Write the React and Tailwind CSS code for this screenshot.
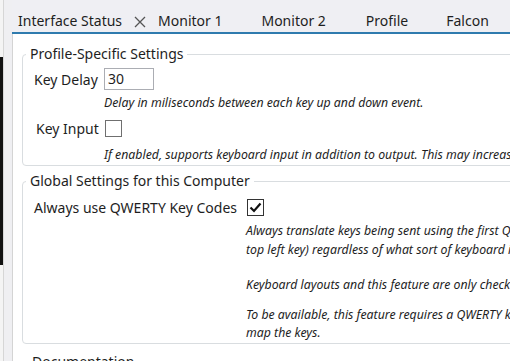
const Check = () => (
  <svg width="13" height="11" viewBox="0 0 13 11" className="block">
    <path d="M1.5 5.5 L5 9 L11.5 1.5" fill="none" stroke="#111" strokeWidth="2.2" />
  </svg>
);

const Tab = ({ label, className = "" }) => (
  <div className={`text-[14px] leading-[20px] text-[#1e1e1e] ${className}`}>{label}</div>
);

const App = () => {
  return (
    <div
      className="w-[510px] h-[361px] overflow-hidden flex bg-white"
      style={{ fontFamily: '"Noto Sans", "Open Sans", sans-serif' }}
    >
      {/* left edge strip */}
      <div className="w-[3px] shrink-0 flex flex-col bg-[#f4f4f4]">
        <div className="h-[57px]" />
        <div className="h-[208px] bg-[#111]" />
      </div>
      <div className="w-[9px] shrink-0 bg-[#efeff2] border-l border-[#d6d6d6]" />

      <div className="flex-1 flex flex-col min-w-0">
        {/* tabs */}
        <div className="h-[34px] shrink-0 bg-[#efeff3] border-b-2 border-[#2f7bae] flex items-end pb-[1px]">
          <Tab label="Interface Status" className="ml-[6px]" />
          <svg width="12" height="12" viewBox="0 0 12 12" className="ml-[12px] mb-[3px]">
            <path d="M1 1 L11 11 M11 1 L1 11" stroke="#555" strokeWidth="1.3" />
          </svg>
          <Tab label="Monitor 1" className="ml-[12px]" />
          <Tab label="Monitor 2" className="ml-[39px]" />
          <Tab label="Profile" className="ml-[40px]" />
          <Tab label="Falcon" className="ml-[38px]" />
        </div>

        {/* content */}
        <div className="flex-1 border-l border-[#d4d4d4] pl-[9px] pt-[10px] text-[#1e1e1e]">
          <fieldset className="w-[600px] border border-[#d9dde0] rounded-[4px] px-[11px] pb-[1px]">
            <legend className="-ml-[8px] px-[4px] text-[14px] leading-[20px]">Profile-Specific Settings</legend>
            <div className="flex items-center mt-[4px]">
              <span className="text-[14px] w-[70px]">Key Delay</span>
              <div className="w-[50px] h-[22px] border border-[#abadb3] text-[14px] leading-[20px] pl-[3px]">30</div>
            </div>
            <p className="ml-[70px] mt-[4px] text-[12.3px] leading-[18px] italic">
              Delay in miliseconds between each key up and down event.
            </p>
            <div className="flex items-center mt-[5px] h-[22px]">
              <span className="text-[14px] w-[71px] pl-[2px]">Key Input</span>
              <div className="w-[17px] h-[17px] border border-[#6f6f6f] bg-white" />
            </div>
            <p className="ml-[70px] mt-[7px] text-[12.3px] leading-[18px] italic whitespace-nowrap">
              If enabled, supports keyboard input in addition to output. This may increase CPU usage.
            </p>
          </fieldset>

          <fieldset className="w-[600px] mt-[5px] border border-[#d9dde0] rounded-[4px] px-[11px] pb-[1px]">
            <legend className="-ml-[8px] px-[4px] text-[14px] leading-[20px]">Global Settings for this Computer</legend>
            <div className="flex items-center mt-[5px] h-[22px]">
              <span className="text-[14px] w-[213px]">Always use QWERTY Key Codes</span>
              <div className="w-[17px] h-[17px] border border-[#333] bg-white flex items-center justify-center">
                <Check />
              </div>
            </div>
            <div className="ml-[212px] mt-[3px] text-[12.3px] leading-[19px] italic w-[340px]">
              <p className="whitespace-nowrap">Always translate keys being sent using the first QWERTY layout (named for the</p>
              <p className="whitespace-nowrap">top left key) regardless of what sort of keyboard is installed.</p>
              <p className="mt-[16px] whitespace-nowrap">Keyboard layouts and this feature are only checked at startup.</p>
              <p className="mt-[12px] whitespace-nowrap leading-[18px]">To be available, this feature requires a QWERTY keyboard layout installed to</p>
              <p className="whitespace-nowrap leading-[18px]">map the keys.</p>
            </div>
          </fieldset>

          <div className="mt-[8px] ml-[10px] text-[14px] leading-[20px]">Documentation</div>
        </div>
      </div>
    </div>
  );
};

export default App;
